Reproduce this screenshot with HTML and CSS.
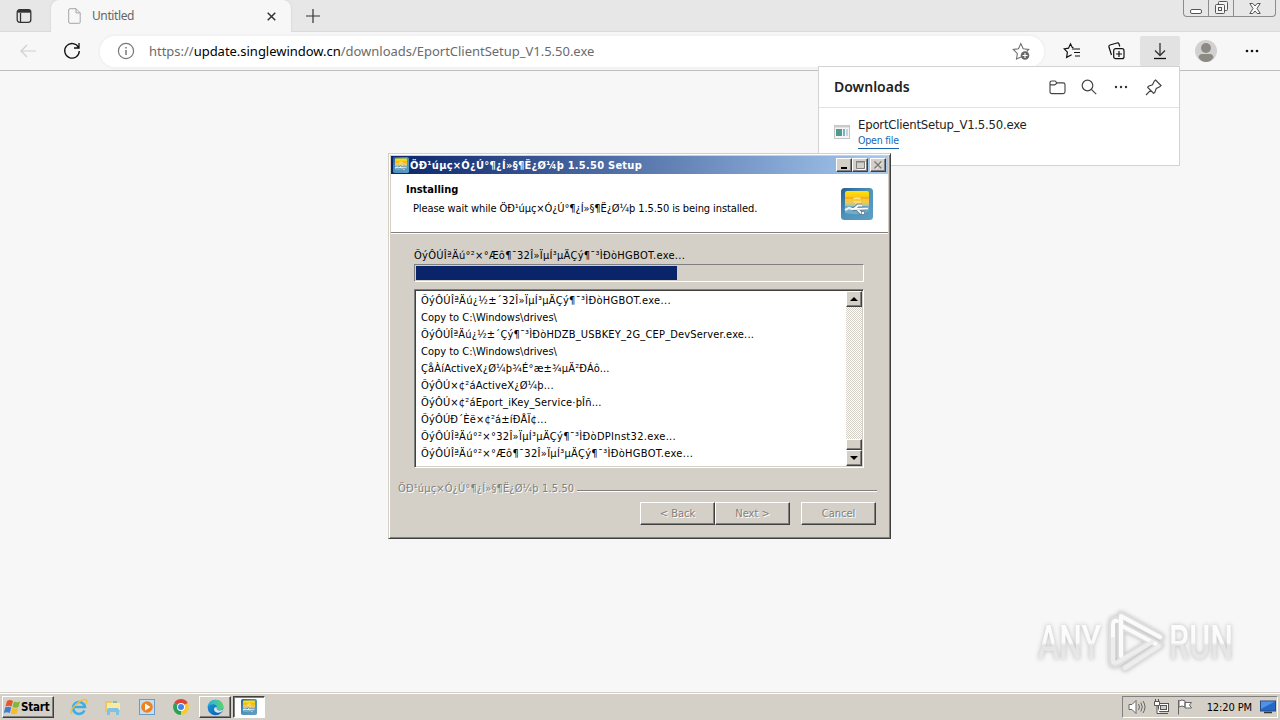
FILE: index.html
```html
<!DOCTYPE html>
<html lang="en">
<head>
    <meta charset="UTF-8">
    <title>Untitled</title>
    <link rel="stylesheet" href="styles.css">
</head>
<body>
    <!-- Shared icons -->
    <svg class="defs">
        <defs>
            <linearGradient id="blue" x2="1" y2="1"><stop stop-color="#285f92"/><stop offset=".5" stop-color="#4f93bb"/><stop offset="1" stop-color="#5c9fc5"/></linearGradient>
            <linearGradient id="gold" x2="0" y2="1"><stop stop-color="#ffe600"/><stop offset=".4" stop-color="#fbc51b"/><stop offset=".75" stop-color="#f5c94e"/><stop offset="1" stop-color="#a9c3a9"/></linearGradient>
            <linearGradient id="edge" x2="1" y2="1"><stop stop-color="#1b9de2"/><stop offset="1" stop-color="#0c59a4"/></linearGradient>
            <linearGradient id="wave" x2="1" y2="0"><stop stop-color="#28afea"/><stop offset="1" stop-color="#5cd56a"/></linearGradient>
            <linearGradient id="mark" x2="0" y2="1"><stop stop-color="#fff"/><stop offset=".5" stop-color="#fafafa"/><stop offset=".55" stop-color="#e4e4e4"/><stop offset="1" stop-color="#ececec"/></linearGradient>
        </defs>
        <symbol id="setup-icon" viewBox="0 0 32 32">
            <rect width="32" height="32" rx="3.5" fill="url(#blue)"/>
            <path d="M4 5q0-2 2-2h20q2 0 2 2v13H4z" fill="url(#gold)"/>
            <path d="M4 10h8M20 10h8" stroke="#ed9c16" stroke-width="1.2"/>
            <path d="M13 11q3-2 6 0M13 14h7" stroke="#fff0a0" stroke-width="1.2" fill="none"/>
            <path d="M4 18h24v5q-10 5-24 2z" fill="#6faecb"/>
            <path d="M4 22l4-2 4 1.500" stroke="#e8f2f6" stroke-width="2.200" fill="none"/>
            <g fill="none" stroke="#5a7688" stroke-width="3.400"><path d="M11 21l16-.5M13 21l4-3.500h4M16 21l4 4h2"/></g>
            <g fill="none" stroke="#fafafa" stroke-width="1.800"><path d="M11 21l16-.5M13 21l4-3.500h4M16 21l4 4h2"/></g>
            <path d="M20.500 23.500h3v3h-3z" fill="#fff" stroke="#5a7688" stroke-width=".7"/>
        </symbol>
    </svg>

    <div class="tab-strip">
        <div class="tab-actions">
            <svg width="16" height="16" viewBox="0 0 16 16" fill="none" stroke="#333" stroke-width="1.3"><rect x="1.2" y="1.7" width="13.6" height="12.6" rx="2.5"/><path d="M2 3.3h12" stroke-width="2.800"/><path d="M4.500 5v9"/></svg>
        </div>
        <div class="tab">
            <svg width="13" height="16" viewBox="0 0 13 16" fill="none" stroke="#a5a5a5"><path d="M.7 2q0-1.3 1.3-1.3h6l4.2 4.2V14q0 1.3-1.3 1.3H2Q.7 15.300.7 14zM8 .7v4.200h4.200"/></svg>
            <span class="tab-title">Untitled</span>
            <svg class="tab-close" width="9" height="9" viewBox="0 0 9 9" stroke="#333" stroke-width="1.5"><path d="M.7.7l7.600 7.600M8.300.7L.7 8.300"/></svg>
        </div>
        <svg class="new-tab" width="14" height="14" viewBox="0 0 14 14" stroke="#333" stroke-width="1.2"><path d="M7 0v14M0 7h14"/></svg>
        <div class="window-controls">
            <span class="win-btn"><svg width="12" height="5" viewBox="0 0 12 5"><rect x=".5" y=".5" width="11" height="4" rx="1.5" fill="#fff" stroke="#555"/></svg></span>
            <span class="win-btn"><svg width="13" height="13" viewBox="0 0 13 13" fill="#f4f4f4" stroke="#555"><rect x="3.500" y=".5" width="9" height="9" rx="1"/><rect x=".5" y="3.500" width="9" height="9" rx="1"/><rect x="3.500" y="6.500" width="3" height="3"/></svg></span>
            <span class="win-btn wide"><svg width="12" height="11" viewBox="0 0 12 11" fill="#fafafa" stroke="#555"><path d="M.8.5h3L6 3l2.200-2.500h3L8 5.500l3.200 5h-3L6 8l-2.200 2.500h-3l3.200-5z"/></svg></span>
        </div>
    </div>

    <div class="toolbar">
        <svg class="back" width="16" height="14" viewBox="0 0 16 14" fill="none" stroke="#cfcfcf" stroke-width="1.2"><path d="M16 7H1M7 1L1 7l6 6"/></svg>
        <svg class="reload" width="18" height="18" viewBox="0 0 18 18" fill="none" stroke="#111" stroke-width="1.3"><path d="M15.500 5.500A7.300 7.300 0 1 0 16.300 9M16 1v5h-5"/></svg>
        <div class="address">
            <svg width="18" height="18" viewBox="0 0 18 18" fill="none" stroke="#777" stroke-width="1.200"><circle cx="9" cy="9" r="7.600"/><path d="M9 8v5M9 5v1.500" stroke-width="1.500"/></svg>
            <span class="url">https://<b>update.singlewindow.cn</b>/downloads/EportClientSetup_V1.5.50.exe</span>
            <svg width="18" height="18" viewBox="0 0 18 18" fill="none" stroke="#707070" stroke-width="1.100"><path d="M9 15l-4.500 2 .9-5.400L1.300 7.500l5.200-.7L8.800 1.500l2.400 5.300 5.500.7-2 2"/><circle cx="13" cy="13.500" r="4.300" fill="#666" stroke="none"/><path d="M13 11v5M10.500 13.500h5" stroke="#fff"/></svg>
        </div>
        <div class="tools">
            <span class="tool"><svg width="18" height="18" viewBox="0 0 18 18" fill="none" stroke="#111" stroke-width="1.200"><path d="M9 7h8M11 10.500h6M12 14h5M10.500 5.500H9.300L7.500 1.800 5.500 6.200l-4.300.7 3.200 3.300-.8 5.200 5-2.700"/></svg></span>
            <span class="tool"><svg width="18" height="18" viewBox="0 0 18 18" fill="none" stroke="#111" stroke-width="1.200"><rect x="6.700" y="6.700" width="10.300" height="10" rx="2"/><path d="M12 9v6M9 12h6M4.500 13L2 5.300Q1.500 3.500 3 3l7-2q1.500-.4 2 1l.8 2.500"/></svg></span>
            <span class="tool active"><svg width="14" height="18" viewBox="0 0 14 18" fill="none" stroke="#333" stroke-width="1.300"><path d="M7 1v12M2 8.500l5 5 5-5"/><path d="M1 16.500h12" stroke="#111"/></svg></span>
            <span class="tool avatar"><svg width="22" height="22" viewBox="0 0 22 22"><circle cx="11" cy="11" r="11" fill="#d3d1cf"/><circle cx="11" cy="8" r="5" fill="#8d8985"/><path d="M3.500 17.500Q4 14 7 14h8q3 0 3.500 3.500Q15.500 22 11 22T3.500 17.500z" fill="#8d8985"/></svg></span>
            <span class="tool more"><svg width="14" height="4" viewBox="0 0 14 4" fill="#111"><circle cx="2" cy="2" r="1.300"/><circle cx="7" cy="2" r="1.300"/><circle cx="12" cy="2" r="1.300"/></svg></span>
        </div>
    </div>

    <div class="page">
        <div class="watermark">
            <svg width="204" height="72" viewBox="0 0 204 72">
                <g fill="url(#mark)">
                    <text class="mark-text" x="4" y="53" textLength="63" lengthAdjust="spacingAndGlyphs">ANY</text>
                    <text class="mark-text" x="135" y="53" textLength="64" lengthAdjust="spacingAndGlyphs">RUN</text>
                </g>
                <g fill="none" stroke-linecap="round" stroke-linejoin="round">
                    <path d="M84 14q-6-2-6 4v37q0 6 6 2l34-22M87 9v44M87 9l40 22M87 20l36 18M91 62l35-23" stroke="#dedede" stroke-width="7"/>
                    <path d="M87 50V10l39 21M88 20l34 18M83 15q-4-1-4 4v14" stroke="#fbfbfb" stroke-width="4"/>
                    <path d="M79 33v21q0 5 5 2l34-20M91 62l34-22" stroke="#ededed" stroke-width="4"/>
                </g>
            </svg>
        </div>
    </div>

    <div class="downloads">
        <div class="downloads-header">
            <h2>Downloads</h2>
            <svg class="folder" width="17" height="15" viewBox="0 0 18 16" fill="none" stroke="#444" stroke-width="1.200"><path d="M1 3q0-2 2-2h3.500l2 2H15q2 0 2 2v7.500q0 2-2 2H3q-2 0-2-2zM1 5.200h5l2.500-2"/></svg>
            <svg width="16" height="16" viewBox="0 0 16 16" fill="none" stroke="#444" stroke-width="1.200"><circle cx="6.500" cy="6.500" r="5.300"/><path d="M10.300 10.300l4.900 4.900"/></svg>
            <svg width="14" height="4" viewBox="0 0 14 4" fill="#333"><circle cx="2" cy="2" r="1.200"/><circle cx="7" cy="2" r="1.200"/><circle cx="12" cy="2" r="1.200"/></svg>
            <svg width="17" height="17" viewBox="0 0 17 17" fill="none" stroke="#444" stroke-width="1.200"><path d="M10.500 1l5.500 5.500-1.300 1.200-3.400 1.700-1.600 4.200-1.200.6L2.700 8.400l.8-1.200 4-1.500 1.800-3.600zM5.500 11.300L1 16"/></svg>
        </div>
        <div class="download-item">
            <svg width="16" height="14" viewBox="0 0 16 14"><rect x=".5" y=".5" width="15" height="13" fill="#f5f5f5" stroke="#c4c4c4"/><path d="M1 1.500h14" stroke="#ccc" stroke-width="2"/><path d="M2 4h6v7H2z" fill="#4f9a90"/><path d="M9 4h2v7H9z" fill="#7bb1c1"/><path d="M12 4h2v7h-2z" fill="#c7d4df"/></svg>
            <div class="download-info">
                <span class="file-name">EportClientSetup_V1.5.50.exe</span>
                <a class="open-file">Open file</a>
            </div>
        </div>
    </div>

    <div class="dialog">
        <div class="title-bar">
            <svg width="16" height="16"><use href="#setup-icon"/></svg>
            <span class="dialog-title">ÖÐ¹úµç×Ó¿Ú°¶¿Í»§¶Ë¿Ø¼þ 1.5.50 Setup</span>
            <span class="caption-btn"><svg width="12" height="10" viewBox="0 0 12 10"><path d="M3 8h6" stroke="#000" stroke-width="2"/></svg></span>
            <span class="caption-btn"><svg width="12" height="10" viewBox="0 0 12 10" fill="none" stroke="#808080"><path d="M2.500 1.500h8v7h-8zM2 2h9"/><path d="M3 9.500h8.500V2" stroke="#fff"/></svg></span>
            <span class="caption-btn close"><svg width="12" height="10" viewBox="0 0 12 10" fill="none" stroke-width="1.500"><path d="M3 2l7 7M10 2L3 9" stroke="#fff"/><path d="M2.500 1.500l7 7M9.500 1.500l-7 7" stroke="#777"/></svg></span>
        </div>
        <div class="dialog-header">
            <div>
                <h1>Installing</h1>
                <p>Please wait while ÖÐ¹úµç×Ó¿Ú°¶¿Í»§¶Ë¿Ø¼þ 1.5.50 is being installed.</p>
            </div>
            <svg width="32" height="32"><use href="#setup-icon"/></svg>
        </div>
        <div class="dialog-body">
            <div class="status">ÕýÔÚÎªÄú°²×°Æô¶¯32Î»ÏµÍ³µÄÇý¶¯³ÌÐòHGBOT.exe...</div>
            <div class="progress"><div class="progress-fill"></div></div>
            <div class="log">
                <ul>
                    <li class="wide">ÕýÔÚÎªÄú¿½±´32Î»ÏµÍ³µÄÇý¶¯³ÌÐòHGBOT.exe...</li>
                    <li class="plain">Copy to C:\Windows\drives\</li>
                    <li>ÕýÔÚÎªÄú¿½±´Çý¶¯³ÌÐòHDZB_USBKEY_2G_CEP_DevServer.exe...</li>
                    <li class="plain">Copy to C:\Windows\drives\</li>
                    <li>ÇåÀíActiveX¿Ø¼þ¾É°æ±¾µÄ²ÐÁô...</li>
                    <li>ÕýÔÚ×¢²áActiveX¿Ø¼þ...</li>
                    <li>ÕýÔÚ×¢²áEport_iKey_Service·þÎñ...</li>
                    <li>ÕýÔÚÐ´Èë×¢²á±íÐÅÏ¢...</li>
                    <li class="wide">ÕýÔÚÎªÄú°²×°32Î»ÏµÍ³µÄÇý¶¯³ÌÐòDPInst32.exe...</li>
                    <li class="wide">ÕýÔÚÎªÄú°²×°Æô¶¯32Î»ÏµÍ³µÄÇý¶¯³ÌÐòHGBOT.exe...</li>
                </ul>
                <div class="scrollbar">
                    <span class="scroll-btn"><svg width="8" height="4" viewBox="0 0 8 4"><path d="M0 4l4-4 4 4z"/></svg></span>
                    <span class="scroll-thumb"></span>
                    <span class="scroll-btn"><svg width="8" height="4" viewBox="0 0 8 4"><path d="M0 0h8L4 4z"/></svg></span>
                </div>
            </div>
        </div>
        <div class="brand">ÖÐ¹úµç×Ó¿Ú°¶¿Í»§¶Ë¿Ø¼þ 1.5.50</div>
        <div class="buttons">
            <span class="btn">&lt; Back</span>
            <span class="btn">Next &gt;</span>
            <span class="btn cancel">Cancel</span>
        </div>
    </div>

    <div class="taskbar">
        <div class="start">
            <svg width="17" height="16" viewBox="0 0 17 16"><path d="M3 2q3-2 6 0L7.500 7.500q-3-1.500-6 0z" fill="#e8562a"/><path d="M10 2.500q3 1.500 6 0L14.500 8q-3 1.500-6 0z" fill="#7db83a"/><path d="M1.200 8.500q3-1.500 6 0L5.800 14q-3-1.500-6 0z" fill="#3d7fd0"/><path d="M8.200 9q3 1.500 6 0l-1.500 5.500q-3 1.500-6 0z" fill="#f6bd24"/></svg>
            <span>Start</span>
        </div>
        <div class="quick">
            <svg width="18" height="18" viewBox="0 0 18 18" fill="none"><path d="M14.500 12.500A6 6 0 1 1 15 9H4" stroke="#3aaee8" stroke-width="2.500"/><path d="M2 16Q-1 13 6 6.500T16.500 2q1 1-.5 4" stroke="#efc13c" stroke-width="1.400"/></svg>
            <svg width="18" height="18" viewBox="0 0 18 18"><path d="M1 3h6l1 2h8v9H1z" fill="#eac95c"/><path d="M3 5h13v7H3z" fill="#faeaa5"/><path d="M9 3h4v2H9z" fill="#8cc08c"/><path d="M3 17v-5q0-2 2-2h8q2 0 2 2v5h-3v-3H6v3z" fill="#7fc2e4"/></svg>
            <svg width="18" height="18" viewBox="0 0 18 18"><rect x="1.500" y="1.500" width="15" height="15" fill="#c5def0" stroke="#6a9cc8"/><circle cx="9" cy="9" r="5.800" fill="#f0821e"/><path d="M7 5.500L12.500 9 7 12.500z" fill="#fff"/></svg>
            <svg width="18" height="18" viewBox="0 0 18 18"><path d="M9 9L2.200 5.100a7.800 7.800 0 0 1 13.600 0z" fill="#dc4437"/><path d="M9 9L9 16.800A7.800 7.800 0 0 1 2.200 5.100z" fill="#2ca053"/><path d="M9 9l6.800-3.900A7.800 7.800 0 0 1 9 16.800z" fill="#fbc92c"/><circle cx="9" cy="9" r="4" fill="#fff"/><circle cx="9" cy="9" r="3" fill="#4285e8"/></svg>
        </div>
        <div class="task"><svg width="17" height="17" viewBox="0 0 18 18"><circle cx="9" cy="9" r="8.300" fill="url(#edge)"/><path d="M.8 8Q2 .8 9 .7q8 .3 8.300 7.500-.3 4-5 3.800-3 0-2-2Q11 6 7 5.500 3 5.500.8 8z" fill="url(#wave)"/><path d="M10.500 9q-1 3 2.500 3.200 2 0 3.500-1l.5.800q-2 3-5.500 2.500Q7 13.500 7.500 10 8.500 8 10.500 9z" fill="#d4e8ee"/></svg></div>
        <div class="task pressed"><svg width="16" height="16"><use href="#setup-icon"/></svg></div>
        <div class="tray">
            <svg width="18" height="16" viewBox="0 0 18 16" fill="none" stroke="#666"><path d="M1 5.500h3l4-4v13l-4-4H1z" fill="#fff"/><path d="M10.500 5q2 3 0 6M12.800 3.500q3 4.500 0 9M15 2q4 6 0 12"/></svg>
            <svg width="17" height="16" viewBox="0 0 17 16" fill="#fff" stroke="#555"><rect x="5.500" y="4.500" width="10" height="8"/><rect x="7.500" y="6.500" width="6" height="4" fill="#ccc"/><path d="M7 14.500h8M1.500 2.500h5v4h-5zM2.500 0v2M5.500 0v2M4 7v7.500h3"/></svg>
            <svg width="16" height="16" viewBox="0 0 16 16" fill="#fff" stroke="#666"><path d="M1.500 1v14.500M2 2q3-2 6 0v6q-3-2-6 0zM8 3.500h6.500L12.500 6l2 3H8z"/></svg>
            <span class="clock">12:20 PM</span>
            <svg width="16" height="14" viewBox="0 0 16 14"><rect x=".5" y="1" width="15" height="10" fill="#2568c8" stroke="#294a82"/><path d="M1 1.500h14L1 9z" fill="#4f93e4"/><path d="M4 12.500h8" stroke="#333" stroke-width="1.500"/></svg>
        </div>
    </div>
</body>
</html>
```
FILE: styles.css
```css
* {
    box-sizing: border-box;
}
body {
    margin: 0;
    width: 1280px;
    height: 720px;
    overflow: hidden;
    display: flex;
    flex-direction: column;
    position: relative;
    background: #f7f7f7;
    color: #000;
    font-family: "DejaVu Sans Condensed", "DejaVu Sans", sans-serif;
    font-size: 11px;
}
svg {
    display: block;
    flex: none;
}
.defs {
    position: absolute;
    width: 0;
    height: 0;
}

/* Browser */
.tab-strip {
    height: 32px;
    flex: none;
    display: flex;
    background: #e7e7e7;
    border-bottom: 1px solid #dadada;
}
.tab-actions {
    width: 51px;
    padding: 8px 0 0 16px;
}
.tab {
    width: 240px;
    height: 32px;
    display: flex;
    align-items: center;
    padding: 0 15px 0 17px;
    background: #f7f7f7;
    border-radius: 8px 8px 0 0;
    box-shadow: 0 0 2px #c4c4c4;
    clip-path: inset(-3px -3px 0 -3px);
}
.tab-title {
    flex: 1;
    margin: -1px 0 0 11px;
    font: 12px "Noto Sans", sans-serif;
    letter-spacing: -0.4px;
    color: #666;
}
.new-tab {
    margin: 9px 0 0 15px;
}
.window-controls {
    display: flex;
    width: 93px;
    height: 17px;
    margin: 0 4px 0 auto;
    border: 1px solid #8c8c8c;
    border-top: 0;
    border-radius: 0 0 4px 4px;
}
.win-btn {
    width: 25px;
    display: flex;
    justify-content: center;
    align-items: flex-end;
    padding-bottom: 2px;
    border-right: 1px solid #8c8c8c;
}
.win-btn.wide {
    width: 41px;
    border-right: 0;
}
.toolbar {
    height: 39px;
    flex: none;
    display: flex;
    align-items: center;
    background: #f7f7f7;
    border-bottom: 1px solid #bdbdbd;
}
.back {
    margin-left: 20px;
}
.reload {
    margin-left: 27px;
}
.address {
    width: 944px;
    height: 31px;
    display: flex;
    align-items: center;
    margin-left: 19px;
    padding: 0 14px 0 17px;
    background: #fff;
    border-radius: 16px;
    box-shadow: 0 0 0 2px #f2f2f2;
}
.url {
    flex: 1;
    margin-left: 14px;
    font: 13px "Noto Sans", sans-serif;
    letter-spacing: -0.02px;
    color: #6b6b6b;
}
.url b {
    font-weight: normal;
    color: #000;
}
.tools {
    display: flex;
    margin-left: 8px;
    gap: 4px;
}
.tool {
    width: 40px;
    height: 30px;
    display: flex;
    align-items: center;
    justify-content: center;
}
.tool.active {
    background: #e2e2e2;
    border-radius: 2px;
}
.tool.avatar {
    margin-left: 2px;
}
.tool.more {
    margin-left: 2px;
}
.page {
    flex: 1;
    display: flex;
    justify-content: flex-end;
    align-items: flex-end;
    padding: 0 42px 14px 0;
}
.watermark {
    filter: drop-shadow(0 0 2px #bbb);
}
.watermark svg {
    overflow: visible;
}
.mark-text {
    font: 500 49px Roboto, sans-serif;
}

/* Downloads flyout */
.downloads {
    position: absolute;
    left: 818px;
    top: 66px;
    width: 362px;
    height: 100px;
    background: #fff;
    border: 1px solid #d3d3d3;
}
.downloads-header {
    height: 41px;
    display: flex;
    align-items: center;
    gap: 17px;
    padding: 0 17px 0 15px;
    border-bottom: 1px solid #e3e3e3;
}
.downloads-header h2 {
    flex: 1;
    margin: -2px 0 0;
    font: 600 14px "Noto Sans", sans-serif;
    color: #222;
}
.folder {
    margin-right: -2px;
}
.download-item {
    display: flex;
    gap: 8px;
    padding: 8px 0 0 15px;
}
.download-item > svg {
    margin-top: 9px;
}
.download-info {
    display: flex;
    flex-direction: column;
    align-items: flex-start;
}
.file-name {
    font: 13px/18px "DejaVu Sans Condensed", sans-serif;
    letter-spacing: -0.22px;
    color: #222;
}
.open-file {
    margin-top: -1px;
    padding-bottom: 1px;
    font-size: 10.5px;
    line-height: 14px;
    letter-spacing: -0.2px;
    color: #1467b3;
    border-bottom: 1px solid #1467b3;
}

/* Installer window */
.dialog {
    position: absolute;
    left: 388px;
    top: 153px;
    width: 503px;
    height: 386px;
    display: flex;
    flex-direction: column;
    padding: 1px;
    background: #d4d0c8;
    border: 1px solid;
    border-color: #d4d0c8 #404040 #404040 #d4d0c8;
    box-shadow: inset 1px 1px #fff, inset -1px -1px #808080;
}
.title-bar {
    height: 18px;
    flex: none;
    display: flex;
    align-items: center;
    margin: 1px 1px 0;
    padding: 0 2px;
    background: linear-gradient(to right, #0a246a, #a6caf0);
}
.dialog-title {
    flex: 1;
    margin-left: 1px;
    color: #fff;
    font-weight: bold;
    letter-spacing: 0.26px;
    white-space: nowrap;
}
.caption-btn, .scroll-btn, .scroll-thumb, .btn {
    display: flex;
    align-items: center;
    justify-content: center;
    background: #d4d0c8;
    border: 1px solid;
    border-color: #fff #404040 #404040 #fff;
    box-shadow: inset -1px -1px #808080;
}
.caption-btn {
    width: 16px;
    height: 14px;
}
.caption-btn.close {
    margin-left: 2px;
}
.dialog-header {
    height: 59px;
    flex: none;
    display: flex;
    justify-content: space-between;
    margin: 0 1px;
    padding: 9px 15px 0;
    background: #fff;
    border-bottom: 1px solid #808080;
    box-shadow: 0 1px #fff;
}
.dialog-header svg {
    margin-top: 5px;
}
.dialog-header h1 {
    margin: 0;
    font-size: 11px;
    line-height: 14px;
}
.dialog-header p {
    margin: 5px 0 0 7px;
    line-height: 14px;
    letter-spacing: -0.1px;
    white-space: nowrap;
}
.dialog-body {
    padding: 15px 25px 0 24px;
}
.status {
    height: 16px;
    line-height: 16px;
    letter-spacing: 0.29px;
    white-space: nowrap;
}
.progress {
    height: 18px;
    padding: 1px;
    border: 1px solid;
    border-color: #808080 #fff #fff #808080;
}
.progress-fill {
    width: 261px;
    height: 14px;
    background: #0a246a;
}
.log {
    height: 179px;
    display: flex;
    margin-top: 7px;
    background: #fff;
    border: 1px solid;
    border-color: #808080 #fff #fff #808080;
    box-shadow: inset 1px 1px #404040, inset -1px -1px #d4d0c8;
    padding: 1px;
}
.log ul {
    flex: 1;
    margin: 0;
    padding: 1px 0 0 5px;
    list-style: none;
}
.log li {
    height: 17px;
    line-height: 17px;
    letter-spacing: 0.17px;
    white-space: nowrap;
}
.log li.wide {
    letter-spacing: 0.31px;
}
.log li.plain {
    letter-spacing: 0;
}
.scrollbar {
    width: 16px;
    display: flex;
    flex-direction: column;
    background: repeating-conic-gradient(#d4d0c8 0 25%, #fff 0 50%) 0 0 / 2px 2px;
}
.scroll-btn {
    height: 16px;
}
.scroll-thumb {
    height: 11px;
    margin-top: auto;
}
.brand {
    display: flex;
    align-items: center;
    margin: 13px 12px 0 8px;
    line-height: 16px;
    letter-spacing: 0.13px;
    color: #808080;
    text-shadow: 1px 1px #fff;
    white-space: nowrap;
}
.brand::after {
    content: "";
    flex: 1;
    height: 1px;
    margin: 2px 0 0 3px;
    background: #808080;
    box-shadow: 0 1px #fff;
}
.buttons {
    display: flex;
    justify-content: flex-end;
    margin: 5px 13px 0 0;
}
.btn {
    width: 75px;
    height: 23px;
    color: #808080;
    text-shadow: 1px 1px #fff;
}
.btn.cancel {
    margin-left: 11px;
}

/* Taskbar */
.taskbar {
    height: 28px;
    flex: none;
    display: flex;
    align-items: flex-start;
    padding: 3px 2px 0;
    background: #d4d0c8;
    border-top: 1px solid #d4d0c8;
    box-shadow: inset 0 1px #fff;
}
.start {
    width: 52px;
    height: 22px;
    display: flex;
    align-items: center;
    padding-left: 1px;
    border: 1px solid;
    border-color: #fff #404040 #404040 #fff;
    box-shadow: inset -1px -1px #808080;
    font-size: 11.5px;
    font-weight: bold;
    letter-spacing: -0.2px;
}
.quick {
    display: flex;
    gap: 16px;
    margin: 2px 9px 0 16px;
}
.task {
    width: 32px;
    height: 22px;
    display: flex;
    align-items: center;
    justify-content: center;
    border: 1px solid;
    border-color: #fff #404040 #404040 #fff;
    box-shadow: inset -1px -1px #808080;
}
.task.pressed {
    margin-left: 2px;
    background: #fff;
    border-color: #404040 #fff #fff #404040;
    box-shadow: inset 1px 1px #808080;
}
.tray {
    width: 156px;
    height: 22px;
    display: flex;
    align-items: center;
    margin-left: auto;
    padding: 0 1px 0 5px;
    gap: 7px;
    border: 1px solid;
    border-color: #808080 #fff #fff #808080;
}
.clock {
    flex: 1;
    text-align: right;
    margin-right: 1px;
    letter-spacing: -0.1px;
    white-space: nowrap;
}
```
